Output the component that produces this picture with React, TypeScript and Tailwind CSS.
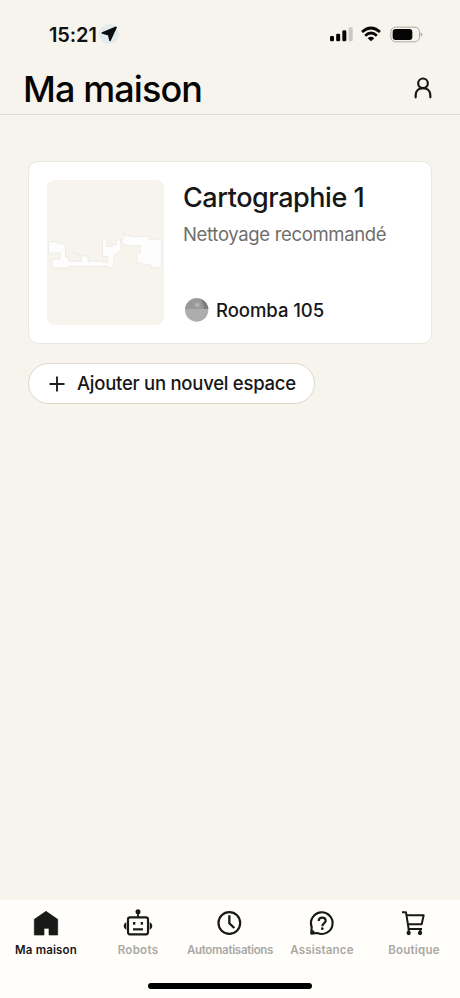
import type { ReactNode } from "react";
import clsx from "clsx";

const SignalIcon = () => (
  <svg width="24" height="16" viewBox="0 0 72 48">
    <g fill="#050505">
      <rect x="0" y="30" width="12" height="16" rx="4" />
      <rect x="18.500" y="23" width="12" height="23" rx="4" />
      <rect x="37" y="13" width="12" height="33" rx="4" />
    </g>
    <rect x="56" y="4" width="12" height="42" rx="4" fill="#c9c8c2" />
  </svg>
);

const WifiIcon = () => (
  <svg width="20" height="16" viewBox="0 0 60 48" fill="none" stroke="#050505">
    <path d="M3 18 Q30 -6 57 18" strokeWidth="8" />
    <path d="M12.500 29 Q30 13 47.500 29" strokeWidth="8" />
    <path d="M30 46 L20 36.500 Q30 28 40 36.500 Z" fill="#050505" stroke="none" />
  </svg>
);

const BatteryIcon = () => (
  <svg width="33" height="17" viewBox="0 0 99 51">
    <rect
      x="2.500"
      y="3.500"
      width="86"
      height="44"
      rx="14"
      fill="none"
      stroke="#aaa9a4"
      strokeWidth="3"
    />
    <rect x="8" y="9" width="59" height="33" rx="9" fill="#050505" />
    <path d="M92 19 Q97 21 97 25.500 Q97 30 92 32 Z" fill="#aaa9a4" />
  </svg>
);

const LocationIcon = () => (
  <span className="flex size-5 items-center justify-center rounded-full bg-[#e2ebee]">
    <svg width="16" height="16" viewBox="0 0 48 48" fill="#0b0f12">
      <path
        d="M45 4 L27 43 L23 26 L4 21 Z"
        stroke="#0b0f12"
        strokeWidth="5"
        strokeLinejoin="round"
      />
    </svg>
  </span>
);

const UserIcon = () => (
  <svg
    width="18"
    height="22"
    viewBox="0 0 54 66"
    fill="none"
    stroke="#151515"
    strokeWidth="6.500"
    strokeLinecap="round"
  >
    <circle cx="27" cy="19" r="14.500" />
    <path d="M5 61 V55 C5 42 14 33.500 27 33.500 C40 33.500 49 42 49 55 V61" />
  </svg>
);

const FloorPlan = () => (
  <svg
    width="117"
    height="145"
    viewBox="81 90 350 435"
    fill="#fdfdfd"
    stroke="#ebe9e3"
    strokeWidth="2.500"
  >
    <path d="M85 275 H113 V281 H136 V322 H145 V334 H183 V318 L161 307 L187 318 H204 V334 H247 V338 H263 V319 H247 V269 H260 V290 H276 V284 H288 V270 H302 V301 L291 309 L281 315 V353 H262 V349 H145 V354 H95 V329 H119 V309 H85 Z" />
    <path d="M302 275 L311 263 V248 L315 257 H334 V260 H387 V268 H424 V353 H392 V345 L350 338 V309 H360 V287 H318 L309 280 Z" />
  </svg>
);

const RobotAvatar = () => (
  <svg width="24" height="24" viewBox="0 0 72 72">
    <clipPath id="disc">
      <circle cx="35" cy="36" r="35" />
    </clipPath>
    <g clipPath="url(#disc)">
      <rect width="72" height="72" fill="#adadad" />
      <rect width="72" height="33" fill="#999999" />
      <path d="M49 0 H72 V33 H57 Q56 18 49 8 Z" fill="#7d7d7d" />
      <circle cx="37" cy="21" r="8" fill="#aaaaaa" />
      <circle cx="37" cy="21" r="3.500" fill="#bcbcbc" />
    </g>
  </svg>
);

const HomeIcon = () => (
  <svg width="30" height="30" viewBox="0 0 90 90">
    <path
      d="M45 10 L80 34 V81 H54 V61 H39 V81 H10 V34 Z"
      fill="#191919"
      stroke="#191919"
      strokeWidth="2"
      strokeLinejoin="round"
    />
  </svg>
);

const RobotIcon = () => (
  <svg
    width="30"
    height="30"
    viewBox="0 0 90 90"
    fill="none"
    stroke="#191919"
    strokeWidth="6.500"
  >
    <rect x="15" y="28" width="60" height="51" rx="6" />
    <path d="M45 28 V12" strokeWidth="5.500" />
    <circle cx="45" cy="11" r="7.500" fill="#191919" stroke="none" />
    <path
      d="M10 42 Q2 46 2 54 Q2 62 10 66 Z M80 42 Q88 46 88 54 Q88 62 80 66 Z"
      fill="#191919"
      stroke="none"
    />
    <path d="M30 64 H60" />
    <rect x="30" y="42" width="7" height="8" fill="#191919" stroke="none" />
    <rect x="53" y="42" width="7" height="8" fill="#191919" stroke="none" />
  </svg>
);

const ClockIcon = () => (
  <svg
    width="30"
    height="30"
    viewBox="0 0 90 90"
    fill="none"
    stroke="#191919"
    strokeWidth="6.500"
  >
    <circle cx="43" cy="45" r="32.500" />
    <path d="M43 22 V46 L58 60" strokeWidth="7" />
  </svg>
);

const HelpIcon = () => (
  <svg
    width="30"
    height="30"
    viewBox="0 0 90 90"
    fill="none"
    stroke="#191919"
    strokeWidth="6.500"
  >
    <path
      d="M14 57 A32.500 32.500 0 1 1 31 75 L13 77 Z"
      strokeLinejoin="round"
    />
    <circle cx="17" cy="73" r="6" fill="#191919" stroke="none" />
    <path d="M35 39 C35 25 56 26 56 38 C56 46 46 45 46 55" />
    <circle cx="46" cy="62" r="4" fill="#191919" stroke="none" />
  </svg>
);

const CartIcon = () => (
  <svg
    width="30"
    height="30"
    viewBox="0 0 90 90"
    fill="none"
    stroke="#191919"
    strokeWidth="6"
    strokeLinejoin="round"
  >
    <path d="M9 13 H21 L29 63 H69" />
    <path d="M23 22 H74 L68 49 H27" />
    <path d="M29 63 V74 M64 63 V74" />
    <circle cx="29" cy="75" r="6.500" fill="#191919" stroke="none" />
    <circle cx="63" cy="75" r="6.500" fill="#191919" stroke="none" />
  </svg>
);

interface Tab {
  label: string;
  icon: ReactNode;
  labelClass: string;
}

const tabs: Tab[] = [
  { label: "Ma maison", icon: <HomeIcon />, labelClass: "tracking-[0.15px]" },
  { label: "Robots", icon: <RobotIcon />, labelClass: "tracking-[0.3px]" },
  {
    label: "Automatisations",
    icon: <ClockIcon />,
    labelClass: "tracking-[-0.3px]",
  },
  { label: "Assistance", icon: <HelpIcon />, labelClass: "tracking-[0.2px]" },
  { label: "Boutique", icon: <CartIcon />, labelClass: "tracking-[0.25px]" },
];

const StatusBar = () => (
  <div className="flex h-[68px] items-center justify-between pl-[49px] pr-[37px]">
    <div className="flex items-center gap-[2px]">
      <span className="pt-px text-[20px] font-semibold tracking-[-0.1px] text-[#111]">
        15:21
      </span>
      <LocationIcon />
    </div>
    <div className="flex items-center">
      <SignalIcon />
      <span className="ml-[7px]">
        <WifiIcon />
      </span>
      <span className="ml-[9px]">
        <BatteryIcon />
      </span>
    </div>
  </div>
);

const SpaceCard = () => (
  <div className="flex h-[183px] rounded-[10px] border border-[#e9e7e0] bg-white px-[18px] py-[18px]">
    <div className="h-[145px] w-[117px] shrink-0 overflow-hidden rounded-[8px] bg-[#f6f4ed]">
      <FloorPlan />
    </div>
    <div className="ml-[19px] flex flex-col whitespace-nowrap">
      <h2 className="pt-px text-[27px] leading-[34px] font-medium tracking-[-0.45px] text-[#171717]">
        Cartographie 1
      </h2>
      <p className="mt-[6px] text-[18.500px] leading-[26px] tracking-[-0.33px] text-[#6f6e6b]">
        Nettoyage recommandé
      </p>
      <div className="mt-auto flex items-center gap-[7px] pl-[2px]">
        <RobotAvatar />
        <span className="pt-[2px] text-[18.500px] font-medium tracking-[-0.05px] text-[#171717]">
          Roomba 105
        </span>
      </div>
    </div>
  </div>
);

const App = () => {
  return (
    <div className="flex h-[998px] w-[460px] flex-col overflow-hidden bg-[#f7f4ed] font-['Inter',sans-serif]">
      <StatusBar />
      <header className="flex h-[47px] items-center justify-between border-b border-[#dddbd5] pr-[28px] pb-[5px] pl-[23px]">
        <h1 className="text-[36px] leading-[40px] font-medium tracking-[-0.9px] text-[#050505]">
          Ma maison
        </h1>
        <span className="pb-[2px]">
          <UserIcon />
        </span>
      </header>
      <main className="flex-1 px-[28px] pt-[46px]">
        <SpaceCard />
        <button className="mt-[19px] flex h-[41px] w-[287px] items-center rounded-full border-[1.500px] border-[#dad8ca] bg-white pl-[20px] whitespace-nowrap text-[#171717]">
          <svg width="16" height="16" viewBox="0 0 16 16" stroke="#202020">
            <path d="M8 0.500 V15.500 M0.500 8 H15.500" strokeWidth="1.900" />
          </svg>
          <span className="ml-[12px] text-[18.500px] font-medium tracking-[-0.26px]">
            Ajouter un nouvel espace
          </span>
        </button>
      </main>
      <nav className="flex h-[98px] flex-col items-center bg-[#fffefa]">
        <div className="grid w-full grid-cols-5 pt-[8px]">
          {tabs.map((tab, i) => (
            <div key={tab.label} className="flex flex-col items-center">
              {tab.icon}
              <span
                className={clsx(
                  "mt-[4px] text-[11.500px] leading-[16px] font-semibold whitespace-nowrap",
                  i === 0 ? "text-[#171717]" : "text-[#a9a8a5]",
                  tab.labelClass
                )}
              >
                {tab.label}
              </span>
            </div>
          ))}
        </div>
        <div className="mt-[25px] h-[6px] w-[164px] rounded-full bg-black" />
      </nav>
    </div>
  );
};

export default App;
